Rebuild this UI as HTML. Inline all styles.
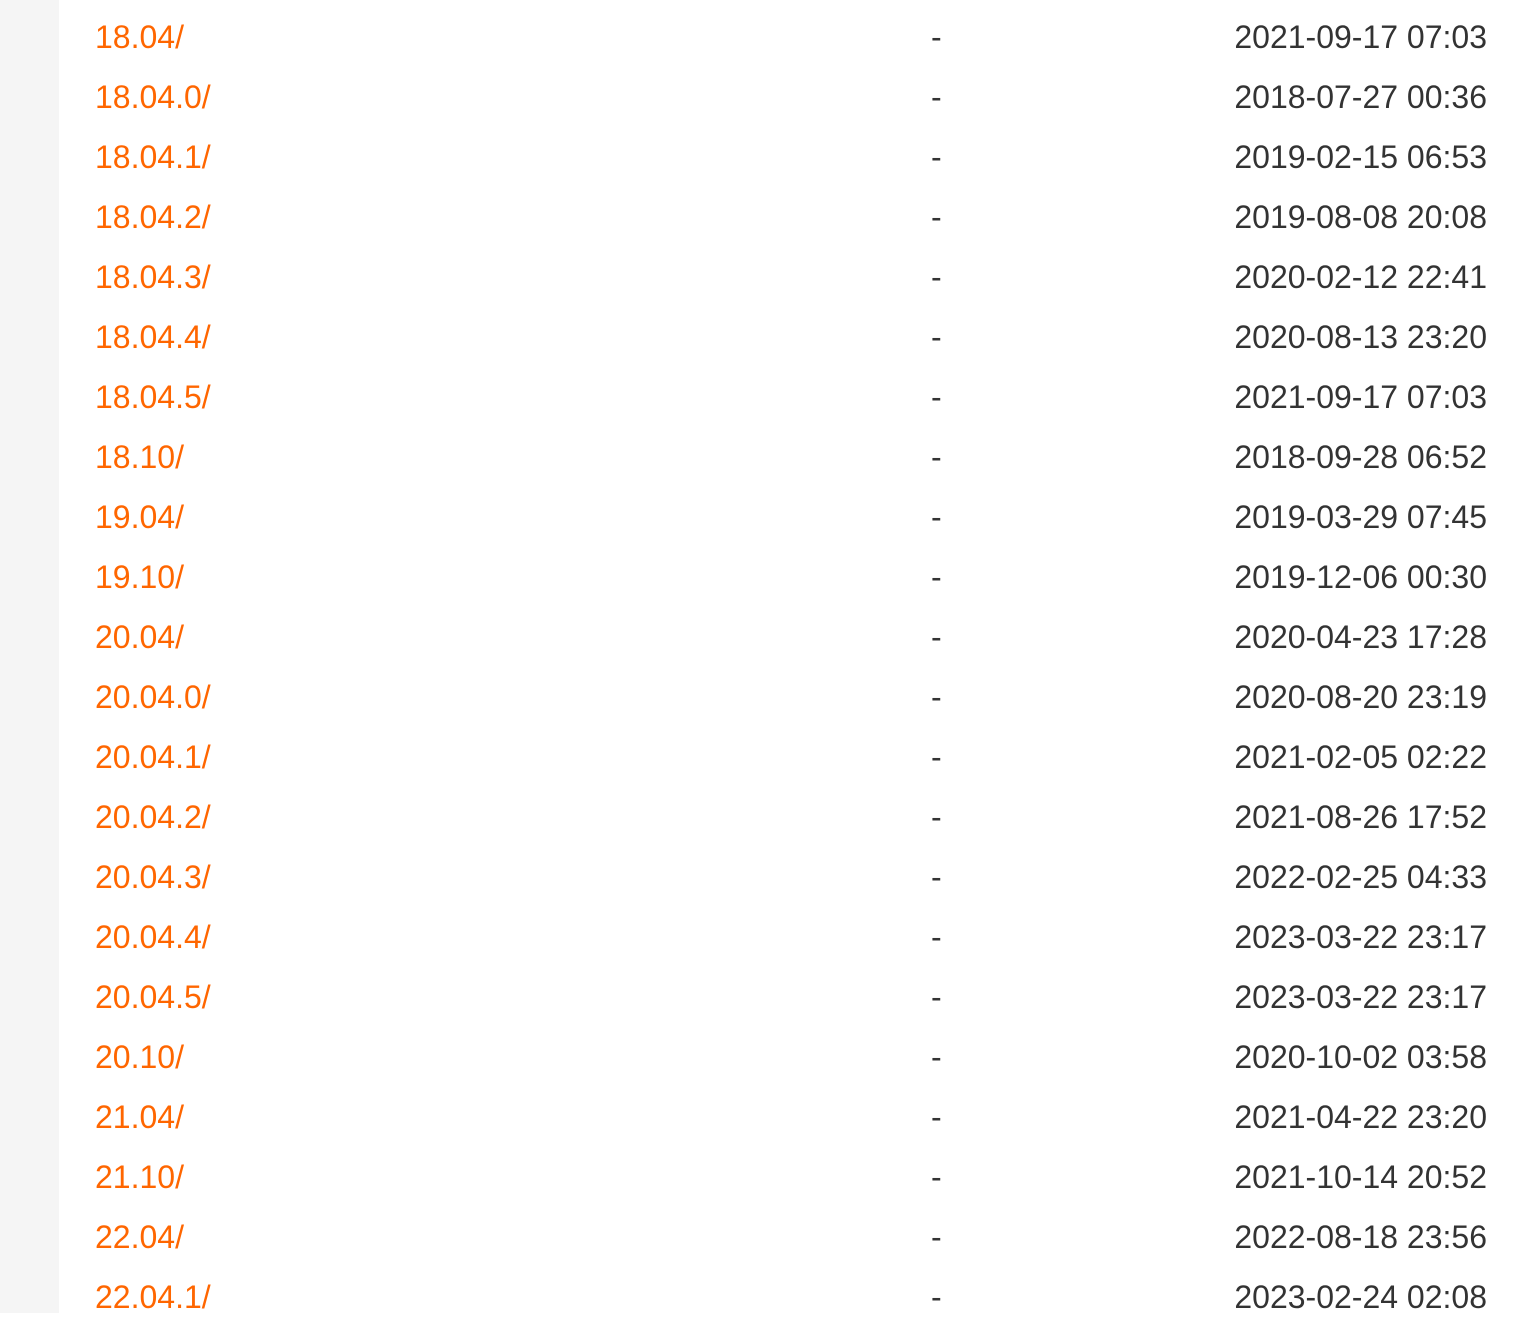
<!DOCTYPE html>
<html><head><style>
html,body{margin:0;padding:0;background:#fff;width:1516px;height:1313px;overflow:hidden}
.side{position:absolute;left:0;top:0;width:59px;height:1313px;background:#f5f5f5}
.r{position:absolute;left:0;width:1516px;height:60px;font-family:"Liberation Sans",Arial,sans-serif;font-size:32px;line-height:60px}
.n{position:absolute;left:95px;color:#ff6600}
.d{position:absolute;left:931px;color:#333}
.t{position:absolute;right:29px;color:#333}
</style></head><body>
<div class="side"></div>
<div id="rows"></div>
<script>
var data=[["18.04/","2021-09-17 07:03"],["18.04.0/","2018-07-27 00:36"],["18.04.1/","2019-02-15 06:53"],["18.04.2/","2019-08-08 20:08"],["18.04.3/","2020-02-12 22:41"],["18.04.4/","2020-08-13 23:20"],["18.04.5/","2021-09-17 07:03"],["18.10/","2018-09-28 06:52"],["19.04/","2019-03-29 07:45"],["19.10/","2019-12-06 00:30"],["20.04/","2020-04-23 17:28"],["20.04.0/","2020-08-20 23:19"],["20.04.1/","2021-02-05 02:22"],["20.04.2/","2021-08-26 17:52"],["20.04.3/","2022-02-25 04:33"],["20.04.4/","2023-03-22 23:17"],["20.04.5/","2023-03-22 23:17"],["20.10/","2020-10-02 03:58"],["21.04/","2021-04-22 23:20"],["21.10/","2021-10-14 20:52"],["22.04/","2022-08-18 23:56"],["22.04.1/","2023-02-24 02:08"]];
var h="";data.forEach(function(d,i){h+='<div class="r" style="top:'+(7+i*60)+'px"><span class="n">'+d[0]+'</span><span class="d">-</span><span class="t">'+d[1]+'</span></div>';});
document.getElementById("rows").innerHTML=h;
</script>
</body></html>
